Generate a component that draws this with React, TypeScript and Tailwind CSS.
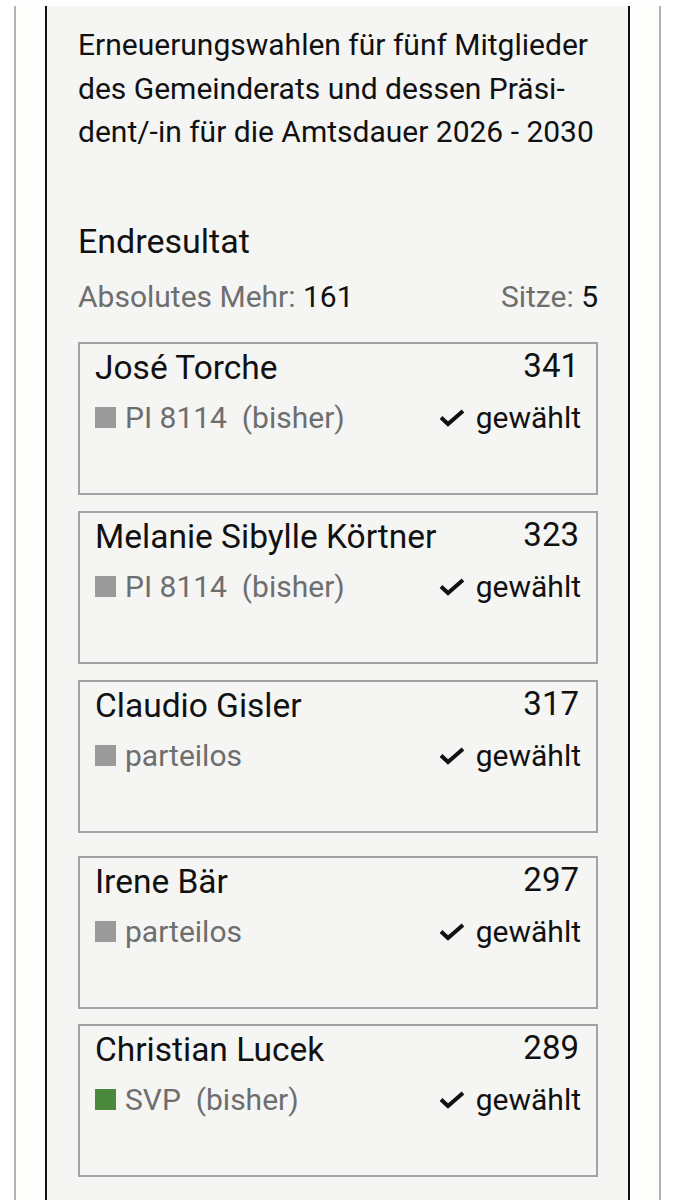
import React from "react";

type Cand = { name: string; votes: number; party: string; bisher: boolean; color: string; mt: string };

const cands: Cand[] = [
  { name: "José Torche", votes: 341, party: "PI 8114", bisher: true, color: "#9b9b9b", mt: "mt-0" },
  { name: "Melanie Sibylle Körtner", votes: 323, party: "PI 8114", bisher: true, color: "#9b9b9b", mt: "mt-[16px]" },
  { name: "Claudio Gisler", votes: 317, party: "parteilos", bisher: false, color: "#9b9b9b", mt: "mt-[16px]" },
  { name: "Irene Bär", votes: 297, party: "parteilos", bisher: false, color: "#9b9b9b", mt: "mt-[23px]" },
  { name: "Christian Lucek", votes: 289, party: "SVP", bisher: true, color: "#4b8a3c", mt: "mt-[15px]" },
];

function Check() {
  return (
    <svg width="26" height="19" viewBox="0 0 26 19" className="shrink-0">
      <path d="M2 9.5 L9 16 L24 3" fill="none" stroke="#111" strokeWidth="4" strokeLinecap="butt" strokeLinejoin="miter" />
    </svg>
  );
}

function Card({ c }: { c: Cand }) {
  return (
    <div className={`${c.mt} h-[153px] border-2 border-[#a3a3a3] pl-[15px] pr-[17px] pt-[4px]`}>
      <div className="flex items-start justify-between">
        <div className="text-[33.5px] leading-[40px] text-[#111]">{c.name}</div>
        <div className="text-[33px] leading-[36px] text-[#111]">{c.votes}</div>
      </div>
      <div className="mt-[11px] flex items-center justify-between">
        <div className="flex items-center text-[30px] leading-[38px] text-[#6e6e6e]">
          <span className="mr-[9px] inline-block h-[21px] w-[21px]" style={{ backgroundColor: c.color }} />
          <span className="whitespace-pre">{c.party}{c.bisher ? "  (bisher)" : ""}</span>
        </div>
        <div className="-mr-[2px] flex items-center gap-[11px] text-[30px] leading-[38px] text-[#111]">
          <Check />
          <span>gewählt</span>
        </div>
      </div>
    </div>
  );
}

export default function App() {
  return (
    <div className="h-[1200px] overflow-hidden bg-white pt-[6px] px-[14px]" style={{ fontFamily: "Roboto, 'Noto Sans', sans-serif" }}>
      <div className="h-[1200px] border-x-2 border-[#b3b3b3] bg-[#fdfdfc] px-[29px]">
        <div className="h-full border-x-2 border-[#111] bg-[#f5f5f4] pl-[31px] pr-[30px] pt-[17px]">
          <div className="whitespace-nowrap text-[30px] leading-[43.5px] text-[#111]">
            Erneuerungswahlen für fünf Mitglieder
            <br />
            des Gemeinderats und dessen Präsi-
            <br />
            dent/-in für die Amtsdauer 2026 - 2030
          </div>
          <div className="mt-[67px] text-[34px] leading-[40px] text-[#111]">Endresultat</div>
          <div className="mt-[18px] flex justify-between text-[30px] leading-[36px]">
            <div>
              <span className="text-[#6e6e6e]">Absolutes Mehr:</span> <span className="text-[#111]">161</span>
            </div>
            <div>
              <span className="text-[#6e6e6e]">Sitze:</span> <span className="text-[#111]">5</span>
            </div>
          </div>
          <div className="mt-[27px]">
            {cands.map((c) => (
              <Card key={c.name} c={c} />
            ))}
          </div>
        </div>
      </div>
    </div>
  );
}
